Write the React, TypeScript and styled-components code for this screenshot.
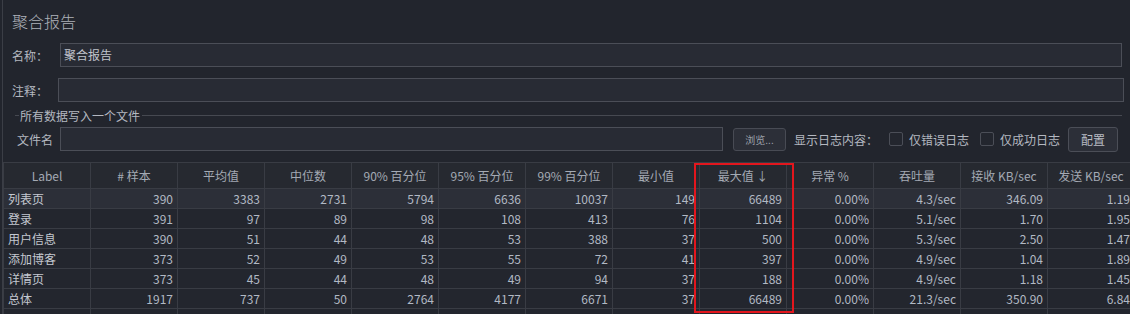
import React from 'react'
import styled, { createGlobalStyle } from 'styled-components'

interface Row {
    label: string,
    values: string[],
    selected?: boolean
}

const headers = ['Label', '# 样本', '平均值', '中位数', '90% 百分位', '95% 百分位', '99% 百分位', '最小值', '最大值 ↓', '异常 %', '吞吐量', '接收 KB/sec', '发送 KB/sec']

const rows: Row[] = [
    { label: '列表页', values: ['390', '3383', '2731', '5794', '6636', '10037', '149', '66489', '0.00%', '4.3/sec', '346.09', '1.19'], selected: true },
    { label: '登录', values: ['391', '97', '89', '98', '108', '413', '76', '1104', '0.00%', '5.1/sec', '1.70', '1.95'] },
    { label: '用户信息', values: ['390', '51', '44', '48', '53', '388', '37', '500', '0.00%', '5.3/sec', '2.50', '1.47'] },
    { label: '添加博客', values: ['373', '52', '49', '53', '55', '72', '41', '397', '0.00%', '4.9/sec', '1.04', '1.89'] },
    { label: '详情页', values: ['373', '45', '44', '48', '49', '94', '37', '188', '0.00%', '4.9/sec', '1.18', '1.45'] },
    { label: '总体', values: ['1917', '737', '50', '2764', '4177', '6671', '37', '66489', '0.00%', '21.3/sec', '350.90', '6.84'] }
]

const App: React.FC = () => {
    return (
        <React.Fragment>
            <GlobalStyle />
            <Panel>
                <Title>聚合报告</Title>
                <FieldRow $top={9} $right={8}>
                    <FieldLabel $width={48}>名称：</FieldLabel>
                    <TextInput>聚合报告</TextInput>
                </FieldRow>
                <FieldRow $top={11} $right={6}>
                    <FieldLabel $width={46}>注释：</FieldLabel>
                    <TextInput />
                </FieldRow>
                <Legend>
                    <LegendLine $short />
                    <LegendText>所有数据写入一个文件</LegendText>
                    <LegendLine />
                </Legend>
                <FileRow>
                    <FieldLabel $width={43}>文件名</FieldLabel>
                    <FileInput />
                    <SmallButton>浏览...</SmallButton>
                    <ShowLabel>显示日志内容：</ShowLabel>
                    <Check><Box />仅错误日志</Check>
                    <Check><Box />仅成功日志</Check>
                    <Button>配置</Button>
                </FileRow>
                <TableWrap>
                    <HeaderRow>
                        {headers.map(h => <HeadCell key={h}>{h}</HeadCell>)}
                    </HeaderRow>
                    {rows.map(r => (
                        <DataRow key={r.label} $selected={r.selected}>
                            <LabelCell>{r.label}</LabelCell>
                            {r.values.map((v, i) => <NumCell key={i}>{v}</NumCell>)}
                        </DataRow>
                    ))}
                    <DataRow>
                        {headers.map(h => <NumCell key={h} />)}
                    </DataRow>
                    <Highlight />
                </TableWrap>
            </Panel>
        </React.Fragment>
    )
}

const GlobalStyle = createGlobalStyle`
    html, body {
        margin: 0;
        padding: 0;
        background: #22252d;
        overflow: hidden;
    }
    body {
        font-family: "Noto Sans CJK SC", "Noto Sans", sans-serif;
        color: #b6bac2;
        font-size: 12px;
    }
`

const Panel = styled.div`
    margin-left: 2px;
    border-left: 1px solid #3b3e46;
    padding-top: 8px;
    height: 306px;
    overflow: hidden;
`

const Title = styled.div`
    padding-left: 9px;
    height: 26px;
    line-height: 26px;
    font-size: 16px;
    font-weight: 300;
    color: #aeb2ba;
`

const FieldRow = styled.div<{ $top: number, $right: number }>`
    display: flex;
    align-items: center;
    margin-top: ${p => p.$top}px;
    padding-left: 9px;
    padding-right: ${p => p.$right}px;
    height: 24px;
`

const FieldLabel = styled.div<{ $width: number }>`
    width: ${p => p.$width}px;
    flex: none;
    font-size: 12px;
    color: #b4b8c0;
`

const TextInput = styled.div`
    flex: 1;
    height: 24px;
    box-sizing: border-box;
    background: #282b34;
    border: 1px solid #4b4e57;
    padding-left: 3px;
    line-height: 22px;
    font-size: 12px;
    color: #c0c4cc;
`

const Legend = styled.div`
    display: flex;
    align-items: center;
    margin-top: 5px;
    height: 16px;
    padding-left: 12px;
    padding-right: 8px;
`

const LegendLine = styled.div<{ $short?: boolean }>`
    height: 1px;
    background: #464951;
    width: ${p => p.$short ? '4px' : 'auto'};
    flex: ${p => p.$short ? 'none' : '1'};
`

const LegendText = styled.div`
    padding: 0 2px 0 1px;
    font-size: 12px;
    color: #b4b8c0;
`

const FileRow = styled.div`
    display: flex;
    align-items: center;
    margin-top: 4px;
    height: 24px;
    padding-left: 14px;
`

const FileInput = styled.div`
    width: 663px;
    height: 24px;
    box-sizing: border-box;
    background: #282b34;
    border: 1px solid #4b4e57;
`

const SmallButton = styled.div`
    margin-left: 10px;
    width: 53px;
    height: 23px;
    box-sizing: border-box;
    border: 1px solid #484b54;
    border-radius: 3px;
    background: #2c2f38;
    font-size: 10px;
    color: #9ca1aa;
    text-align: center;
    line-height: 21px;
`

const ShowLabel = styled.div`
    margin-left: 8px;
    font-size: 12px;
    color: #b4b8c0;
`

const Check = styled.div`
    display: flex;
    align-items: center;
    margin-left: 11px;
    font-size: 12px;
    color: #b4b8c0;
    gap: 6px;
`

const Box = styled.span`
    width: 14px;
    height: 14px;
    box-sizing: border-box;
    border: 1px solid #4b4e57;
    border-radius: 2px;
    background: #23262e;
`

const Button = styled.div`
    margin-left: 8px;
    width: 50px;
    height: 25px;
    box-sizing: border-box;
    border: 1px solid #4b4e57;
    border-radius: 3px;
    background: #2c2f38;
    font-size: 12px;
    color: #b8bcc4;
    text-align: center;
    line-height: 23px;
`

const TableWrap = styled.div`
    position: relative;
    margin-top: 11px;
    width: 1132px;
    border-left: 1px solid #393c44;
    border-top: 1px solid #393c44;
`

const HeaderRow = styled.div`
    display: grid;
    grid-template-columns: repeat(13, 87px);
    height: 26px;
    background: #262930;
`

const HeadCell = styled.div`
    box-sizing: border-box;
    border-right: 1px solid #393c44;
    border-bottom: 1px solid #393c44;
    text-align: center;
    line-height: 25px;
    font-size: 12px;
    color: #a4aab4;
    white-space: nowrap;
`

const DataRow = styled.div<{ $selected?: boolean }>`
    display: grid;
    grid-template-columns: repeat(13, 87px);
    height: 20px;
    background: ${p => p.$selected ? '#2c2f38' : '#23262e'};
`

const Cell = styled.div`
    box-sizing: border-box;
    border-right: 1px solid #393c44;
    border-bottom: 1px solid #393c44;
    line-height: 19px;
    font-size: 12px;
    white-space: nowrap;
    overflow: hidden;
`

const LabelCell = styled(Cell)`
    padding-left: 4px;
    color: #c4c8d0;
`

const NumCell = styled(Cell)`
    text-align: right;
    padding-right: 4px;
    color: #b2b9c4;
`

const Highlight = styled.div`
    position: absolute;
    left: 690px;
    top: 0;
    width: 100px;
    height: 150px;
    box-sizing: border-box;
    border: 2px solid #e3161d;
    pointer-events: none;
`

export default App
